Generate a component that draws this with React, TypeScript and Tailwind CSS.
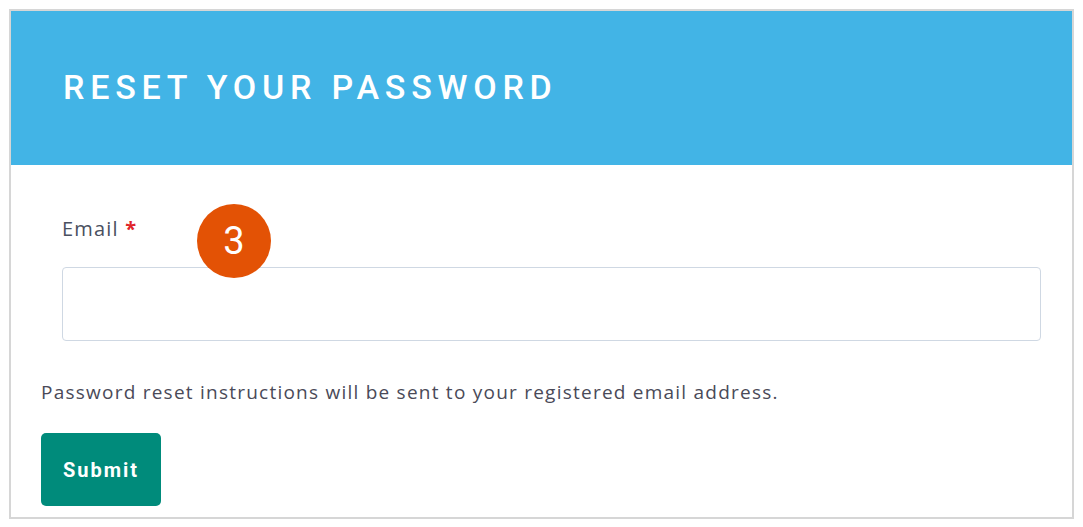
import React from 'react';

const font = { fontFamily: 'Roboto, "Noto Sans", sans-serif' };
const body = { fontFamily: '"Open Sans", "Noto Sans", sans-serif' };

export default function App() {
    return (
        <div className="w-[1083px] h-[527px] bg-white pt-[9px] pl-[9px]" style={font}>
            <div className="relative w-[1065px] h-[510px] border-2 border-[#d6d6d6] flex flex-col">
                <div className="h-[154px] bg-[#42b4e6] flex items-center pl-[52px]">
                    <h1 className="text-white text-[34px] font-medium tracking-[0.17em] leading-none mt-[-2px]">RESET YOUR PASSWORD</h1>
                </div>
                <div className="pl-[51px] pr-[30px] pt-[53px]" style={body}>
                    <label className="text-[20px] text-[#4a5060] leading-none tracking-[0.06em]">
                        Email <span className="text-[#e0262b] font-bold">*</span>
                    </label>
                    <input type="text" className="mt-[25px] block w-[979px] h-[74px] border border-[#cfd8e3] rounded-[4px] outline-none" />
                </div>
                <div className="pl-[30px] pt-[42px]" style={body}>
                    <p className="text-[19px] text-[#4a4a58] leading-none tracking-[0.065em]">
                        Password reset instructions will be sent to your registered email address.
                    </p>
                </div>
                <div className="pl-[30px] pt-[31px]">
                    <button className="w-[120px] h-[73px] bg-[#008b7b] rounded-[5px] text-white text-[20px] font-bold tracking-[0.1em]">
                        Submit
                    </button>
                </div>
                <div className="absolute left-[186px] top-[193px] w-[74px] h-[74px] rounded-full bg-[#e35205] flex items-center justify-center">
                    <span className="text-white text-[38px] leading-none">3</span>
                </div>
            </div>
        </div>
    );
}
